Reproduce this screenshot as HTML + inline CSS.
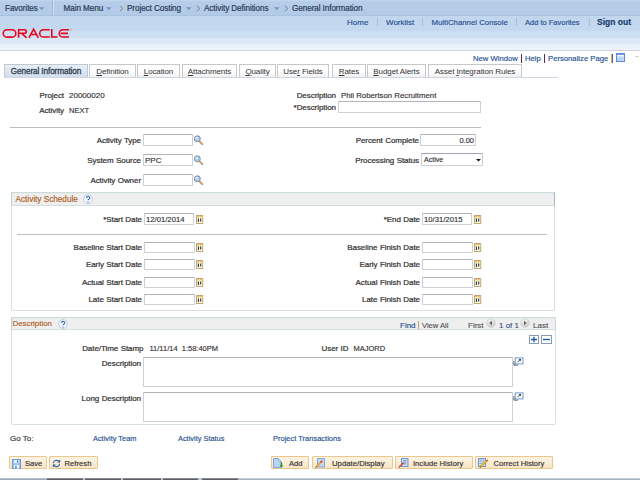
<!DOCTYPE html>
<html><head><meta charset="utf-8">
<style>
html,body{margin:0;padding:0;width:640px;height:480px;overflow:hidden;background:#fff;position:relative}
body{font-family:"Liberation Sans",sans-serif;font-size:8px;color:#333}
.a{position:absolute;white-space:nowrap;line-height:10px;-webkit-text-stroke:0.15px currentColor}
.b{font-weight:normal;font-size:8px;letter-spacing:-0.06px;word-spacing:0.3px;-webkit-text-stroke:0.22px currentColor}
.r{text-align:right}
.box{position:absolute;box-sizing:border-box}
.inp{position:absolute;box-sizing:border-box;border:1px solid #d0d0d4;border-top-color:#b4b4b8;background:#fff;border-radius:1px}
.lnk{color:#24508f;-webkit-text-stroke:0.15px currentColor}
#nav{position:absolute;left:0;top:0;width:640px;height:15px;background:linear-gradient(#c2d7ee 0,#b6cde8 2px,#b3cbe7 100%);border-bottom:1px solid #a9c2df}
#hdr{position:absolute;left:0;top:16px;width:640px;height:34px;background:linear-gradient(#c2d6ee 0,#c4d8ef 44%,#ccdef2 44%,#cfe0f3 64%,#dae7f6 64%,#dde9f6 82%,#e8f0f9 82%,#edf3fa 100%);border-bottom:1px solid #d2d6dc}
.nt{color:#2b3d58;font-size:8.2px;letter-spacing:-0.1px;-webkit-text-stroke:0.2px currentColor}
.sep{position:absolute;top:0px;width:1px;height:15px;background:#9db8d8;border-right:1px solid #d2e2f3}
.hsep{position:absolute;top:18px;width:1px;height:8px;background:#a9bdd8}
.tab{position:absolute;top:64px;height:13px;box-sizing:border-box;border:1px solid #c8c8c8;border-bottom:none;background:linear-gradient(#fff 0,#fff 50%,#f0f0f0 100%);color:#333;text-align:center;line-height:14px;font-size:8px;letter-spacing:-0.1px}
.tab.act{background:linear-gradient(#e8eef6,#d3dfee);border-color:#bfc9d6;color:#2f3e52;font-weight:normal;font-size:8.2px;letter-spacing:-0.1px;-webkit-text-stroke:0.3px currentColor}
.gb{position:absolute;box-sizing:border-box;border:1px solid #d6e0e0;border-radius:0 0 2px 2px}
.gbh{position:absolute;box-sizing:border-box;background:#efefef;border-top:1px solid #d0dcdc;border-bottom:1px solid #d2dede;border-left:1px solid #bccbd8;border-right:1px solid #a9b2c2;box-shadow:inset 0 1px 0 #e6ecec}
.gt{color:#ac5d1c;font-size:8.2px}
.btn{position:absolute;top:456px;height:13px;box-sizing:border-box;border:1px solid #e8c88e;background:linear-gradient(#fdf4e4,#f8e5c6);color:#222;line-height:12px;border-radius:1px}
.hr{position:absolute;height:1px;background:#bdbdbd}
</style></head><body>

<!-- top nav -->
<div id="nav"></div>
<div class="a nt" style="left:5px;top:4px">Favorites</div>
<svg class="box" style="left:39px;top:7px" width="6" height="4"><path d="M0 0.3H5.5L2.75 3Z" fill="#7393c0"/></svg>
<div class="sep" style="left:52px"></div>
<div class="a nt" style="left:63.5px;top:4px">Main Menu</div>
<svg class="box" style="left:106px;top:7px" width="6" height="4"><path d="M0 0.3H5.5L2.75 3Z" fill="#7393c0"/></svg>
<svg class="box" style="left:119px;top:5px" width="5" height="7"><path d="M0.8 0.8L3.8 3.5L0.8 6.2" fill="none" stroke="#6a7d94" stroke-width="0.9"/></svg>
<div class="a nt" style="left:127px;top:4px">Project Costing</div>
<svg class="box" style="left:186px;top:7px" width="6" height="4"><path d="M0 0.3H5.5L2.75 3Z" fill="#7393c0"/></svg>
<svg class="box" style="left:196px;top:5px" width="5" height="7"><path d="M0.8 0.8L3.8 3.5L0.8 6.2" fill="none" stroke="#6a7d94" stroke-width="0.9"/></svg>
<div class="a nt" style="left:204px;top:4px">Activity Definitions</div>
<svg class="box" style="left:274px;top:7px" width="6" height="4"><path d="M0 0.3H5.5L2.75 3Z" fill="#7393c0"/></svg>
<svg class="box" style="left:284px;top:5px" width="5" height="7"><path d="M0.8 0.8L3.8 3.5L0.8 6.2" fill="none" stroke="#6a7d94" stroke-width="0.9"/></svg>
<div class="a nt" style="left:292px;top:4px">General Information</div>

<!-- header -->
<div id="hdr"></div>
<div class="a lnk" style="left:347px;top:18px">Home</div>
<div class="hsep" style="left:377px"></div>
<div class="a lnk" style="left:386px;top:18px">Worklist</div>
<div class="hsep" style="left:422px"></div>
<div class="a lnk" style="left:431.5px;top:18px;font-size:7.8px">MultiChannel Console</div>
<div class="hsep" style="left:516px"></div>
<div class="a lnk" style="left:525px;top:18px;font-size:7.5px">Add to Favorites</div>
<div class="hsep" style="left:589px"></div>
<div class="a" style="left:597px;top:17px;font-size:8.5px;font-weight:bold;color:#163a6e">Sign out</div>
<svg class="box" style="left:0;top:27px" width="74" height="13" viewBox="0 0 74 13"><g fill="none" stroke="#e8061e" stroke-width="1.6">
<rect x="3.25" y="2.7" width="12.6" height="7.4" rx="3.7"/>
<path d="M18.6 10.8V2.7H24.5A1.8 1.8 0 0 1 24.5 6.3H18.6M21.8 6.3L26.6 10.8"/>
<path d="M28.9 10.8L33.6 2.2L38.3 10.8M31.5 7.5H36.6"/>
<path d="M49.75 2.75H43.4A3.6 3.6 0 0 0 43.4 10.05H49.75"/>
<path d="M51.8 2.1V10.05H57.5"/>
<path d="M69 2.75H62.9A3.6 3.6 0 0 0 62.9 10.05H69M60.7 6.4H67.9"/>
</g><circle cx="70.9" cy="2.8" r="0.7" fill="#f08080"/></svg>

<!-- page links -->
<div class="a lnk" style="left:473px;top:53.7px;font-size:7.7px">New Window</div>
<div class="box" style="left:521px;top:54px;width:1px;height:9px;background:#5a2a55"></div>
<div class="a lnk" style="left:525px;top:53.7px;font-size:7.7px">Help</div>
<div class="box" style="left:544px;top:54px;width:1px;height:9px;background:#5a2a55"></div>
<div class="a lnk" style="left:548px;top:53.7px;font-size:7.7px">Personalize Page</div>
<div class="box" style="left:611px;top:54px;width:2px;height:9px;background:#e0b060;border-right:1px solid #4a62a8"></div>
<svg class="box" style="left:616px;top:53px" width="9" height="9"><rect x="0.5" y="0.5" width="8" height="8" fill="#c4daf4" stroke="#5a8fd6"/><rect x="1" y="1" width="7" height="1" fill="#6d9ddd"/><rect x="1" y="2" width="7" height="1.3" fill="#f4f8fd"/><path d="M1 6H8M3.8 3.3V8" stroke="#a6c4ec" stroke-width="0.6"/></svg>
<div class="box" style="left:635px;top:56px;width:4px;height:1px;background:#d4d4d4"></div>

<!-- tabs -->
<div class="box" style="left:4px;top:77px;width:554px;height:1px;background:#cdd6e2"></div>
<div class="tab act" style="left:4px;width:84px">General Information</div>
<div class="tab" style="left:89px;width:47px"><u>D</u>efinition</div>
<div class="tab" style="left:137px;width:43px"><u>L</u>ocation</div>
<div class="tab" style="left:182px;width:55px"><u>A</u>ttachments</div>
<div class="tab" style="left:239px;width:37px"><u>Q</u>uality</div>
<div class="tab" style="left:277px;width:52px">Use<u>r</u> Fields</div>
<div class="tab" style="left:332px;width:34px"><u>R</u>ates</div>
<div class="tab" style="left:367px;width:59px"><u>B</u>udget Alerts</div>
<div class="tab" style="left:428px;width:94px">Asset <u>I</u>ntegration Rules</div>

<!-- project / activity -->
<div class="a b r" style="right:576px;top:91px">Project</div>
<div class="a" style="left:69px;top:91px">20000020</div>
<div class="a b r" style="right:576px;top:106px">Activity</div>
<div class="a" style="left:69px;top:106px;font-size:7.5px">NEXT</div>
<div class="a b r" style="right:304px;top:91px">Description</div>
<div class="a" style="left:341px;top:91px;font-size:7.8px">Phil Robertson Recruitment</div>
<div class="a b r" style="right:304px;top:103px">*Description</div>
<div class="inp" style="left:338px;top:101px;width:143px;height:12px"></div>
<div class="hr" style="left:10px;top:127px;width:471px"></div>

<!-- activity type etc -->
<div class="a b r" style="right:499px;top:136px">Activity Type</div>
<div class="inp" style="left:143px;top:134px;width:50px;height:12px"></div>
<svg class="box" style="left:193px;top:134px" width="12" height="12" viewBox="0 0 12 12"><path d="M6.2 7L9.2 10" stroke="#dd9a55" stroke-width="2" stroke-linecap="round"/><path d="M9.1 9.9L9.7 10.5" stroke="#8ab4e0" stroke-width="1.4" stroke-linecap="round"/><circle cx="4.3" cy="4.8" r="3" fill="#a6cdf0" stroke="#7a8899" stroke-width="0.9"/><circle cx="3.7" cy="4.1" r="1.2" fill="#e2f0fc"/></svg>
<div class="a b r" style="right:499px;top:156px">System Source</div>
<div class="inp" style="left:143px;top:154px;width:50px;height:12px"></div>
<div class="a" style="left:145px;top:156px">PPC</div>
<svg class="box" style="left:193px;top:154px" width="12" height="12" viewBox="0 0 12 12"><path d="M6.2 7L9.2 10" stroke="#dd9a55" stroke-width="2" stroke-linecap="round"/><path d="M9.1 9.9L9.7 10.5" stroke="#8ab4e0" stroke-width="1.4" stroke-linecap="round"/><circle cx="4.3" cy="4.8" r="3" fill="#a6cdf0" stroke="#7a8899" stroke-width="0.9"/><circle cx="3.7" cy="4.1" r="1.2" fill="#e2f0fc"/></svg>
<div class="a b r" style="right:499px;top:176px">Activity Owner</div>
<div class="inp" style="left:143px;top:174px;width:50px;height:12px"></div>
<svg class="box" style="left:193px;top:174px" width="12" height="12" viewBox="0 0 12 12"><path d="M6.2 7L9.2 10" stroke="#dd9a55" stroke-width="2" stroke-linecap="round"/><path d="M9.1 9.9L9.7 10.5" stroke="#8ab4e0" stroke-width="1.4" stroke-linecap="round"/><circle cx="4.3" cy="4.8" r="3" fill="#a6cdf0" stroke="#7a8899" stroke-width="0.9"/><circle cx="3.7" cy="4.1" r="1.2" fill="#e2f0fc"/></svg>
<div class="a b r" style="right:221px;top:136px">Percent Complete</div>
<div class="inp" style="left:420px;top:134px;width:56px;height:12px"></div>
<div class="a r" style="right:166px;top:135.5px;font-size:7.5px">0.00</div>
<div class="a b r" style="right:221px;top:156px">Processing Status</div>
<div class="inp" style="left:421px;top:153px;width:62px;height:13px;border-top-color:#a4a4b4"></div>
<div class="a" style="left:424px;top:155px;font-size:7.1px">Active</div>
<svg class="box" style="left:475.5px;top:159px" width="5" height="3"><path d="M0 0H5L2.5 2.4Z" fill="#111"/></svg>

<!-- Activity Schedule group -->
<div class="gb" style="left:11px;top:192px;width:544px;height:119px"></div>
<div class="gbh" style="left:11px;top:192px;width:544px;height:14px"></div>
<div class="a gt" style="left:15.5px;top:194.5px">Activity Schedule</div>
<svg class="box" style="left:83px;top:194px" width="10" height="10" viewBox="0 0 10 10"><circle cx="5" cy="5" r="4.4" fill="#f5f8fc" stroke="#a9c0e2" stroke-width="0.8"/><path d="M3.5 3.9A1.6 1.6 0 1 1 5.8 5.3Q5 5.7 5 6.3" fill="none" stroke="#3c6fb6" stroke-width="1.2"/><circle cx="5" cy="8.1" r="0.6" fill="#3c6fb6"/></svg>
<div class="a b r" style="right:498px;top:215px">*Start Date</div>
<div class="inp" style="left:144px;top:213px;width:50px;height:12px"></div>
<div class="a" style="left:146px;top:215px;font-size:7.7px">12/01/2014</div>
<svg class="box" style="left:196px;top:215px" width="8" height="9" viewBox="0 0 8 9"><rect x="0.5" y="0.6" width="6.2" height="7.9" fill="#fcfaf0" stroke="#bda96f"/><rect x="1" y="1.1" width="5.2" height="2" fill="#f1e6a0"/><circle cx="2.1" cy="1" r="0.7" fill="#d97a4a"/><circle cx="4.9" cy="1" r="0.7" fill="#d97a4a"/><path d="M2.4 3.6V7M4.7 3.6V6.6" stroke="#2a2a2a" stroke-width="1.1"/></svg>
<div class="a b r" style="right:220px;top:215px">*End Date</div>
<div class="inp" style="left:422px;top:213px;width:50px;height:12px"></div>
<div class="a" style="left:424px;top:215px;font-size:7.7px">10/31/2015</div>
<svg class="box" style="left:474px;top:215px" width="8" height="9" viewBox="0 0 8 9"><rect x="0.5" y="0.6" width="6.2" height="7.9" fill="#fcfaf0" stroke="#bda96f"/><rect x="1" y="1.1" width="5.2" height="2" fill="#f1e6a0"/><circle cx="2.1" cy="1" r="0.7" fill="#d97a4a"/><circle cx="4.9" cy="1" r="0.7" fill="#d97a4a"/><path d="M2.4 3.6V7M4.7 3.6V6.6" stroke="#2a2a2a" stroke-width="1.1"/></svg>
<div class="hr" style="left:17px;top:234px;width:530px"></div>
<div class="a b r" style="right:498px;top:243px">Baseline Start Date</div>
<div class="inp" style="left:144px;top:242px;width:51px;height:11px"></div>
<svg class="box" style="left:195.5px;top:243px" width="8" height="9" viewBox="0 0 8 9"><rect x="0.5" y="0.6" width="6.2" height="7.9" fill="#fcfaf0" stroke="#bda96f"/><rect x="1" y="1.1" width="5.2" height="2" fill="#f1e6a0"/><circle cx="2.1" cy="1" r="0.7" fill="#d97a4a"/><circle cx="4.9" cy="1" r="0.7" fill="#d97a4a"/><path d="M2.4 3.6V7M4.7 3.6V6.6" stroke="#2a2a2a" stroke-width="1.1"/></svg>
<div class="a b r" style="right:220px;top:243px">Baseline Finish Date</div>
<div class="inp" style="left:422px;top:242px;width:51px;height:11px"></div>
<svg class="box" style="left:473.5px;top:243px" width="8" height="9" viewBox="0 0 8 9"><rect x="0.5" y="0.6" width="6.2" height="7.9" fill="#fcfaf0" stroke="#bda96f"/><rect x="1" y="1.1" width="5.2" height="2" fill="#f1e6a0"/><circle cx="2.1" cy="1" r="0.7" fill="#d97a4a"/><circle cx="4.9" cy="1" r="0.7" fill="#d97a4a"/><path d="M2.4 3.6V7M4.7 3.6V6.6" stroke="#2a2a2a" stroke-width="1.1"/></svg>
<div class="a b r" style="right:498px;top:260px">Early Start Date</div>
<div class="inp" style="left:144px;top:259px;width:51px;height:11px"></div>
<svg class="box" style="left:195.5px;top:260px" width="8" height="9" viewBox="0 0 8 9"><rect x="0.5" y="0.6" width="6.2" height="7.9" fill="#fcfaf0" stroke="#bda96f"/><rect x="1" y="1.1" width="5.2" height="2" fill="#f1e6a0"/><circle cx="2.1" cy="1" r="0.7" fill="#d97a4a"/><circle cx="4.9" cy="1" r="0.7" fill="#d97a4a"/><path d="M2.4 3.6V7M4.7 3.6V6.6" stroke="#2a2a2a" stroke-width="1.1"/></svg>
<div class="a b r" style="right:220px;top:260px">Early Finish Date</div>
<div class="inp" style="left:422px;top:259px;width:51px;height:11px"></div>
<svg class="box" style="left:473.5px;top:260px" width="8" height="9" viewBox="0 0 8 9"><rect x="0.5" y="0.6" width="6.2" height="7.9" fill="#fcfaf0" stroke="#bda96f"/><rect x="1" y="1.1" width="5.2" height="2" fill="#f1e6a0"/><circle cx="2.1" cy="1" r="0.7" fill="#d97a4a"/><circle cx="4.9" cy="1" r="0.7" fill="#d97a4a"/><path d="M2.4 3.6V7M4.7 3.6V6.6" stroke="#2a2a2a" stroke-width="1.1"/></svg>
<div class="a b r" style="right:498px;top:278px">Actual Start Date</div>
<div class="inp" style="left:144px;top:277px;width:51px;height:11px"></div>
<svg class="box" style="left:195.5px;top:278px" width="8" height="9" viewBox="0 0 8 9"><rect x="0.5" y="0.6" width="6.2" height="7.9" fill="#fcfaf0" stroke="#bda96f"/><rect x="1" y="1.1" width="5.2" height="2" fill="#f1e6a0"/><circle cx="2.1" cy="1" r="0.7" fill="#d97a4a"/><circle cx="4.9" cy="1" r="0.7" fill="#d97a4a"/><path d="M2.4 3.6V7M4.7 3.6V6.6" stroke="#2a2a2a" stroke-width="1.1"/></svg>
<div class="a b r" style="right:220px;top:278px">Actual Finish Date</div>
<div class="inp" style="left:422px;top:277px;width:51px;height:11px"></div>
<svg class="box" style="left:473.5px;top:278px" width="8" height="9" viewBox="0 0 8 9"><rect x="0.5" y="0.6" width="6.2" height="7.9" fill="#fcfaf0" stroke="#bda96f"/><rect x="1" y="1.1" width="5.2" height="2" fill="#f1e6a0"/><circle cx="2.1" cy="1" r="0.7" fill="#d97a4a"/><circle cx="4.9" cy="1" r="0.7" fill="#d97a4a"/><path d="M2.4 3.6V7M4.7 3.6V6.6" stroke="#2a2a2a" stroke-width="1.1"/></svg>
<div class="a b r" style="right:498px;top:295px">Late Start Date</div>
<div class="inp" style="left:144px;top:294px;width:51px;height:11px"></div>
<svg class="box" style="left:195.5px;top:295px" width="8" height="9" viewBox="0 0 8 9"><rect x="0.5" y="0.6" width="6.2" height="7.9" fill="#fcfaf0" stroke="#bda96f"/><rect x="1" y="1.1" width="5.2" height="2" fill="#f1e6a0"/><circle cx="2.1" cy="1" r="0.7" fill="#d97a4a"/><circle cx="4.9" cy="1" r="0.7" fill="#d97a4a"/><path d="M2.4 3.6V7M4.7 3.6V6.6" stroke="#2a2a2a" stroke-width="1.1"/></svg>
<div class="a b r" style="right:220px;top:295px">Late Finish Date</div>
<div class="inp" style="left:422px;top:294px;width:51px;height:11px"></div>
<svg class="box" style="left:473.5px;top:295px" width="8" height="9" viewBox="0 0 8 9"><rect x="0.5" y="0.6" width="6.2" height="7.9" fill="#fcfaf0" stroke="#bda96f"/><rect x="1" y="1.1" width="5.2" height="2" fill="#f1e6a0"/><circle cx="2.1" cy="1" r="0.7" fill="#d97a4a"/><circle cx="4.9" cy="1" r="0.7" fill="#d97a4a"/><path d="M2.4 3.6V7M4.7 3.6V6.6" stroke="#2a2a2a" stroke-width="1.1"/></svg>


<!-- Description group -->
<div class="gb" style="left:11px;top:317px;width:545px;height:108px"></div>
<div class="gbh" style="left:11px;top:317px;width:545px;height:13px;border-right-color:#ccd4d8"></div>
<div class="a gt" style="left:12.5px;top:318.7px;font-size:7.9px">Description</div>
<svg class="box" style="left:58px;top:319px" width="10" height="10" viewBox="0 0 10 10"><circle cx="5" cy="5" r="4.4" fill="#f5f8fc" stroke="#a9c0e2" stroke-width="0.8"/><path d="M3.5 3.9A1.6 1.6 0 1 1 5.8 5.3Q5 5.7 5 6.3" fill="none" stroke="#3c6fb6" stroke-width="1.2"/><circle cx="5" cy="8.1" r="0.6" fill="#3c6fb6"/></svg>
<div class="a lnk" style="left:400px;top:321px">Find</div>
<div class="box" style="left:418px;top:321px;width:1px;height:8px;background:#d0a070"></div>
<div class="a" style="left:422px;top:321px;color:#555;font-size:7.6px">View All</div>
<div class="a" style="left:468px;top:321px;color:#555">First</div>
<svg class="box" style="left:486px;top:318px" width="10" height="10" viewBox="0 0 10 10"><defs><linearGradient id="ag" x1="0" y1="0" x2="0.4" y2="1"><stop offset="0" stop-color="#fafafa"/><stop offset="1" stop-color="#cfcfcf"/></linearGradient></defs><circle cx="5" cy="5" r="4.3" fill="url(#ag)" stroke="#c8c8c8" stroke-width="0.7"/><path d="M6 2.8V7.2L3.3 5Z" fill="#666"/></svg>
<div class="a" style="left:499px;top:321px;color:#3a5585">1 of 1</div>
<svg class="box" style="left:520px;top:318px" width="10" height="10" viewBox="0 0 10 10"><defs><linearGradient id="ag2" x1="0" y1="0" x2="0.4" y2="1"><stop offset="0" stop-color="#fafafa"/><stop offset="1" stop-color="#cfcfcf"/></linearGradient></defs><circle cx="5" cy="5" r="4.3" fill="url(#ag2)" stroke="#c8c8c8" stroke-width="0.7"/><path d="M4 2.8V7.2L6.7 5Z" fill="#666"/></svg>
<div class="a" style="left:533px;top:321px;color:#555">Last</div>
<svg class="box" style="left:529px;top:335px" width="10" height="9"><rect x="0.5" y="0.5" width="9" height="8" fill="#fff" stroke="#8a9ab0"/><path d="M2 4.5H8M5 1.8V7.2" stroke="#1f5fb0" stroke-width="1.4"/></svg>
<svg class="box" style="left:541px;top:335px" width="11" height="9"><rect x="0.5" y="0.5" width="10" height="8" fill="#fff" stroke="#8a9ab0"/><path d="M2 4.5H9" stroke="#1f5fb0" stroke-width="1.4"/></svg>
<div class="a b r" style="right:496.5px;top:344px">Date/Time Stamp</div>
<div class="a" style="left:149.5px;top:344px;font-size:7.5px">11/11/14&nbsp; 1:58:40PM</div>
<div class="a b r" style="right:291.5px;top:344px">User ID</div>
<div class="a" style="left:353.5px;top:344px;font-size:7.5px">MAJORD</div>
<div class="a b r" style="right:499px;top:359px">Description</div>
<div class="inp" style="left:143px;top:357px;width:370px;height:30px"></div>
<svg class="box" style="left:512.5px;top:356.5px" width="11" height="9" viewBox="0 0 11 9"><path d="M0.9 4.2V8.1H4.8" fill="none" stroke="#4a4f58" stroke-width="1"/><rect x="2.2" y="0.9" width="7.8" height="6" fill="#fff" stroke="#7198cc"/><path d="M4.6 5.2L7.4 2.4" stroke="#2a2a2a" stroke-width="0.9"/><path d="M5.6 2H7.9V4.3Z" fill="#2a2a2a"/></svg>
<div class="a b r" style="right:499px;top:394px">Long Description</div>
<div class="inp" style="left:143px;top:392px;width:370px;height:30px"></div>
<svg class="box" style="left:512.5px;top:391.5px" width="11" height="9" viewBox="0 0 11 9"><path d="M0.9 4.2V8.1H4.8" fill="none" stroke="#4a4f58" stroke-width="1"/><rect x="2.2" y="0.9" width="7.8" height="6" fill="#fff" stroke="#7198cc"/><path d="M4.6 5.2L7.4 2.4" stroke="#2a2a2a" stroke-width="0.9"/><path d="M5.6 2H7.9V4.3Z" fill="#2a2a2a"/></svg>

<!-- go to -->
<div class="a b" style="left:10px;top:434px;color:#444">Go To:</div>
<div class="a lnk" style="left:93px;top:434px;font-size:7.4px">Activity Team</div>
<div class="a lnk" style="left:178px;top:434px;font-size:7.4px">Activity Status</div>
<div class="a lnk" style="left:273px;top:434px;font-size:7.5px">Project Transactions</div>

<!-- buttons -->
<div class="btn" style="left:9px;width:38px"></div>
<svg class="box" style="left:12px;top:458.5px" width="9" height="10"><rect x="0.5" y="0.5" width="8" height="9" fill="#9cc4f0" stroke="#6a9ad8"/><rect x="2" y="1" width="5" height="3.2" fill="#e4effb"/><rect x="5" y="1.4" width="1.2" height="2.2" fill="#4a7ac0"/><rect x="2.2" y="6" width="4.6" height="3.5" fill="#fff"/><rect x="3.3" y="6.6" width="1.3" height="2.9" fill="#3a70c8"/></svg>
<div class="a" style="left:25px;top:458.5px;font-size:7.6px">Save</div>
<div class="btn" style="left:49px;width:49px"></div>
<svg class="box" style="left:51.5px;top:458.5px" width="9" height="9" viewBox="0 0 9 9"><path d="M1.3 4.2A3.2 3.2 0 0 1 6.6 2.2M7.7 4.8A3.2 3.2 0 0 1 2.4 6.8" fill="none" stroke="#2d62b8" stroke-width="1.1"/><path d="M8.2 0.6V3.6H5.2Z M0.8 8.4V5.4H3.8Z" fill="#1f52a8"/></svg>
<div class="a" style="left:64.5px;top:458.5px;font-size:7.7px">Refresh</div>
<div class="btn" style="left:271px;width:38px"></div>
<svg class="box" style="left:273px;top:458px" width="11" height="10" viewBox="0 0 11 10"><path d="M0.5 0.5H5.5L8 3V9.5H0.5Z" fill="#b9d3f3" stroke="#7fa3d6"/><path d="M5.5 0.5V3H8" fill="#e8f1fc" stroke="#7fa3d6" stroke-width="0.7"/><path d="M8.5 4.5V8" stroke="#1f9a2a" stroke-width="1.3"/><path d="M6.6 7.2H10.4L8.5 9.8Z" fill="#1f9a2a"/></svg>
<div class="a" style="left:289px;top:458.5px;font-size:7.6px">Add</div>
<div class="btn" style="left:312px;width:81px"></div>
<svg class="box" style="left:314.5px;top:458px" width="10" height="10" viewBox="0 0 10 10"><rect x="2.5" y="0.5" width="7" height="8.5" fill="#bcd6f4" stroke="#88a8d8"/><path d="M4 3H8M4 5H8" stroke="#e6f0fb" stroke-width="0.8"/><path d="M1.2 9L6.5 3.7" stroke="#e8a040" stroke-width="1.8"/><path d="M5.8 4.4L7.2 3" stroke="#d03a30" stroke-width="1.8"/><path d="M0.5 9.6L1.6 8.5" stroke="#444" stroke-width="1"/></svg>
<div class="a" style="left:332px;top:458.5px;font-size:7.75px">Update/Display</div>
<div class="btn" style="left:395px;width:78px"></div>
<svg class="box" style="left:397.5px;top:458px" width="11" height="10" viewBox="0 0 11 10"><rect x="3.5" y="0.5" width="6.5" height="8" fill="#cfe0f6" stroke="#7198cf"/><path d="M5 2.5H8.5M5 4.2H8.5M5 5.9H8.5" stroke="#5a7fb8" stroke-width="0.7"/><path d="M0.8 9.4L5.2 5" stroke="#d8453a" stroke-width="1.4"/><path d="M4.2 5.3L5.8 4.6L5.2 6.2Z" fill="#c03030"/></svg>
<div class="a" style="left:413px;top:458.5px;font-size:7.6px">Include History</div>
<div class="btn" style="left:475px;width:78px"></div>
<svg class="box" style="left:477.5px;top:458px" width="11" height="10" viewBox="0 0 11 10"><rect x="0.5" y="0.5" width="7" height="8" fill="#dbe7f7" stroke="#6f93c8"/><path d="M0.5 3H7.5M0.5 5.5H7.5M3 0.5V8.5M5.3 0.5V8.5" stroke="#7d9fd0" stroke-width="0.6"/><path d="M2.5 9L9 2.5" stroke="#e6b020" stroke-width="1.9"/><path d="M8.2 3.3L9.8 1.7" stroke="#c8702a" stroke-width="1.6"/><path d="M1.8 9.7L3 8.5" stroke="#333" stroke-width="1"/></svg>
<div class="a" style="left:493.5px;top:458.5px;font-size:7.65px">Correct History</div>

<!-- bottom strip -->
<div class="box" style="left:0;top:478px;width:640px;height:2px;background:linear-gradient(rgba(255,255,255,0.55),rgba(255,255,255,0) 50%),linear-gradient(90deg,#9aaab8 0px,#9aaab8 47px,#5c6066 47px,#5c6066 83px,#b8c4d0 83px,#b8c4d0 85px,#5c6066 85px,#5c6066 121px,#b8c4d0 121px,#b8c4d0 123px,#5c6066 123px,#5c6066 161px,#b8c4d0 161px,#b8c4d0 163px,#5c6066 163px,#5c6066 198px,#b8c4d0 198px,#b8c4d0 202px,#5c6066 202px,#5c6066 238px,#a8b4c0 238px,#a8b4c0 640px)"></div>

</body></html>
